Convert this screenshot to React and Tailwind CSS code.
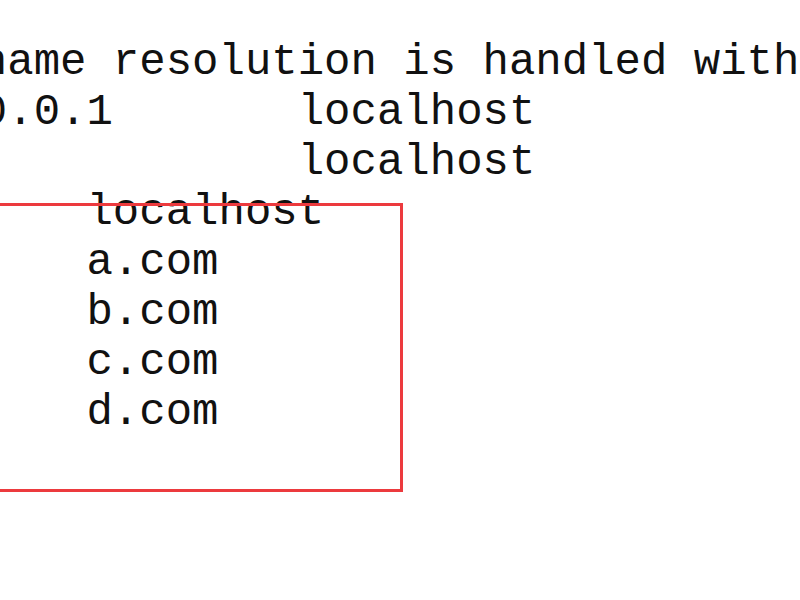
const lines = [
  "# localhost name resolution is handled within DNS itself.",
  "#       127.0.0.1       localhost",
  "#       ::1             localhost",
  "127.0.0.1       localhost",
  "127.0.0.1       a.com",
  "127.0.0.1       b.com",
  "127.0.0.1       c.com",
  "127.0.0.1       d.com",
];

export default function App() {
  return (
    <div className="relative w-[800px] h-[600px] overflow-hidden bg-white">
      <pre
        className="pt-[37px] ml-[-336px] text-[44px] leading-[50px] text-[#111] whitespace-pre"
        style={{ fontFamily: '"Liberation Mono", monospace' }}
      >
        {lines.map((l, i) => (
          <div key={i}>{l}</div>
        ))}
      </pre>
      {/* red annotation box over the text */}
      <div className="absolute left-[-10px] top-[203px] w-[413px] h-[289px] border-[3px] border-[#ec3a3e]" />
    </div>
  );
}
